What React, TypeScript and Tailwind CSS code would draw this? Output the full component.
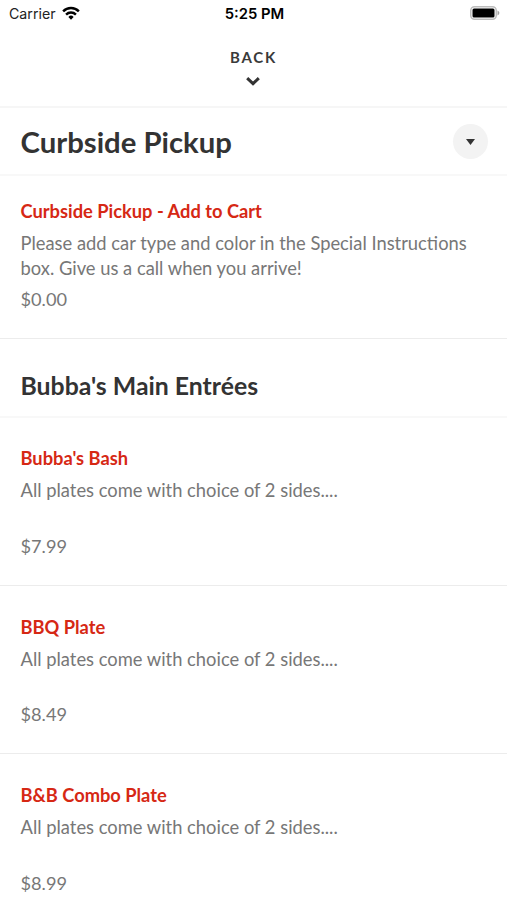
const entrees = [
  { name: "Bubba's Bash", price: '$7.99' },
  { name: 'BBQ Plate', price: '$8.49' },
  { name: 'B&B Combo Plate', price: '$8.99' },
];

function StatusBar() {
  return (
    <div className="grid h-7 grid-cols-3 items-center pl-[9px] pr-[7px] font-['Inter',sans-serif] text-[14px] text-black">
      <div className="flex items-center gap-[6px]">
        <span className="text-[14.2px] leading-[20px] text-[#222]">Carrier</span>
        <svg className="mb-[2px]" width="18" height="14" viewBox="0 0 19 14" fill="none" stroke="#000" strokeWidth="2.6">
          <path d="M1.2 5.2a11.8 11.8 0 0 1 16.6 0" />
          <path d="M4.3 8.6a7.4 7.4 0 0 1 10.4 0" />
          <path d="m9.5 14-2.8-2.9a4 4 0 0 1 5.6 0z" fill="#000" stroke="none" />
        </svg>
      </div>
      <span className="text-center text-[14.8px] font-semibold leading-[20px]">5:25 PM</span>
      <svg className="mb-[2px] justify-self-end" width="30" height="14" viewBox="0 0 30 14">
        <rect x="0.75" y="0.75" width="25.5" height="12.5" rx="3.8" fill="none" stroke="#bdbdbd" strokeWidth="1.5" />
        <rect x="2.5" y="2.5" width="22" height="9" rx="1.5" fill="#000" />
        <path d="M27.5 4.6v4.8c1-.4 1.8-1.3 1.8-2.4s-.8-2-1.8-2.4z" fill="#a3a3a3" />
      </svg>
    </div>
  );
}

export default function App() {
  return (
    <div className="h-[900px] overflow-hidden bg-white font-['Lato',sans-serif] text-[18.35px] text-[#777]">
      <StatusBar />
      <button className="flex h-[80px] w-full flex-col items-center border-b-2 border-[#f6f6f6] pt-[19px] text-[#3a3a3a]">
        <span className="text-[15px] font-bold leading-[20px] tracking-[1.75px]">BACK</span>
        <svg className="mt-[9px] -translate-x-px" width="14" height="10" viewBox="0 0 14 10" fill="none" stroke="#333" strokeWidth="3">
          <path d="m1.2 2.1 5.8 5.6 5.8-5.6" />
        </svg>
      </button>

      <header className="flex h-[68px] items-center justify-between border-b-2 border-[#f8f8f8] pl-[20.5px] pr-[19px]">
        <h1 className="pt-[2px] text-[29.3px] font-bold text-[#333]">Curbside Pickup</h1>
        <span className="flex size-[35px] items-center justify-center rounded-full bg-[#f3f3f3]">
          <svg className="mt-px" width="9" height="6" viewBox="0 0 9 6"><path d="M0 0h9L4.5 6z" fill="#333" /></svg>
        </span>
      </header>

      <section className="h-[163px] border-b border-[#ececec] px-[20.5px] pt-[23px]">
        <h3 className="text-[18.3px] font-bold leading-[24px] text-[#d62814]">Curbside Pickup - Add to Cart</h3>
        <p className="mt-[8px] leading-[24.5px]">
          Please add car type and color in the Special Instructions
          <br />
          box. Give us a call when you arrive!
        </p>
        <p className="mt-[7px] text-[18.2px] leading-[25px]">$0.00</p>
      </section>

      <h2 className="h-[79px] border-b-2 border-[#f8f8f8] px-[20.5px] pt-[31px] text-[24.8px] font-bold leading-[32px] text-[#333]">
        Bubba's Main Entrées
      </h2>

      {entrees.map((item) => (
        <section key={item.name} className="h-[168.5px] pt-[28px]">
          <h3 className="px-[20.5px] text-[18.3px] font-bold leading-[24px] text-[#d62814]">{item.name}</h3>
          <p className="mt-[8px] px-[20.5px] leading-[24.5px]">All plates come with choice of 2 sides....</p>
          <p className="mt-[31px] h-[52px] border-b border-[#ececec] px-[20.5px] text-[18.2px] leading-[25px]">{item.price}</p>
        </section>
      ))}
    </div>
  );
}
